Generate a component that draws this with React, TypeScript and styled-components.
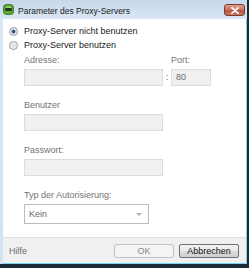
import React from 'react';
import styled, { createGlobalStyle } from 'styled-components';

const GlobalStyle = createGlobalStyle`
  html, body {
    margin: 0;
    padding: 0;
    background: #1d2a38;
  }
  body {
    width: 249px;
    height: 268px;
    overflow: hidden;
    font-family: 'Liberation Sans', Arial, sans-serif;
  }
`;

const Window = styled.div`
  width: 249px;
  height: 268px;
  box-sizing: border-box;
  display: flex;
  flex-direction: column;
  background: linear-gradient(#c6d8ec, #d9e6f3 18px, #d4e2f0);
  border-right: 2px solid #1d2a38;
  border-bottom: 4px solid #1d2a38;
`;

const TitleBar = styled.div`
  height: 19px;
  flex: none;
  display: flex;
  align-items: center;
  padding: 0 3px;
  gap: 4px;
`;

const Title = styled.span`
  flex: 1;
  font-size: 8.5px;
  color: #1a1a1a;
  padding-top: 2px;
`;

const CloseButton = styled.div`
  width: 21px;
  height: 12px;
  box-sizing: border-box;
  margin-top: 1px;
  margin-right: -1px;
  border: 1px solid #7d3b2e;
  border-radius: 3px;
  background: linear-gradient(#dea08f, #c7705b 50%, #b6573f 51%, #c67560);
  display: flex;
  align-items: center;
  justify-content: center;
`;

const Client = styled.div`
  flex: 1;
  margin-left: 3px;
  display: flex;
  flex-direction: column;
  background: #fff;
  border-right: 1px solid #74d4f2;
  border-bottom: 1px solid #74d4f2;
`;

const Content = styled.div`
  flex: 1;
  padding: 5px 0 0 6px;
`;

const RadioRow = styled.div`
  height: 14px;
  display: flex;
  align-items: center;
  font-size: 9px;
  color: #1a1a1a;
`;

const RadioDot = styled.span<{ $checked?: boolean }>`
  width: 9px;
  height: 9px;
  box-sizing: border-box;
  margin-right: 6px;
  border-radius: 50%;
  border: 1px solid #9a9a9a;
  background: radial-gradient(circle, ${(p) => (p.$checked ? '#2a4766 0, #3b5f85 1.7px, #e4e8ec 2.3px' : '#d8d8d8 0, #e8e8e8 2px')}, #f4f4f4);
`;

const Form = styled.div`
  margin-left: 15px;
  padding-top: 2px;
`;

const Field = styled.div<{ $first?: boolean }>`
  margin-top: ${(p) => (p.$first ? '0' : '13px')};
`;

const AddressGrid = styled.div`
  display: grid;
  grid-template-columns: 139px 8px 40px;
`;

const Label = styled.div`
  height: 13px;
  line-height: 13px;
  margin-bottom: 2px;
  font-size: 9px;
  color: #737373;
`;

const Colon = styled.div`
  grid-column: 2;
  grid-row: 2;
  height: 17px;
  line-height: 17px;
  text-align: center;
  font-size: 9px;
  color: #555;
`;

const Input = styled.div<{ $width?: number }>`
  width: ${(p) => p.$width ?? 139}px;
  height: 17px;
  box-sizing: border-box;
  padding-left: 4px;
  line-height: 15px;
  font-size: 9px;
  color: #6a6a6a;
  background: #f0f0f0;
  border: 1px solid #dcdcdc;
`;

const Select = styled.div`
  width: 125px;
  height: 20px;
  box-sizing: border-box;
  padding: 0 6px 0 4px;
  display: flex;
  align-items: center;
  justify-content: space-between;
  font-size: 9px;
  color: #6a6a6a;
  background: #fff;
  border: 1px solid #bdbdbd;
`;

const Arrow = styled.span`
  width: 0;
  height: 0;
  border-left: 3px solid transparent;
  border-right: 3px solid transparent;
  border-top: 3px solid #b0b0b0;
`;

const Footer = styled.div`
  height: 25px;
  flex: none;
  display: flex;
  align-items: center;
  gap: 5px;
  padding: 0 7px 0 6px;
  background: #f0f0f0;
  border-top: 1px solid #dfdfdf;
`;

const HelpLink = styled.span`
  flex: 1;
  font-size: 9px;
  color: #6d6d6d;
`;

const Button = styled.div<{ $disabled?: boolean }>`
  width: 60px;
  height: 14px;
  box-sizing: border-box;
  border-radius: 2px;
  display: flex;
  align-items: center;
  justify-content: center;
  font-size: 9px;
  color: ${(p) => (p.$disabled ? '#8a8a8a' : '#111')};
  border: 1px solid ${(p) => (p.$disabled ? '#c2c2c2' : '#707070')};
  background: ${(p) =>
    p.$disabled ? '#f4f4f4' : 'linear-gradient(#f3f3f3, #ebebeb 50%, #dddddd 51%, #cfcfcf)'};
`;

const AppIcon = () => (
  <svg width="11" height="11" viewBox="0 0 11 11">
    <rect x="0.5" y="0.5" width="10" height="10" rx="3" fill="#5fa83a" stroke="#3d7a22" />
    <rect x="2" y="4" width="7" height="3" rx="1" fill="#263b1c" />
    <rect x="3" y="2.5" width="5" height="1.5" rx="0.7" fill="#9fd47c" />
  </svg>
);

const CloseX = () => (
  <svg width="8" height="7" viewBox="0 0 8 7">
    <path d="M1 0.8 L7 6.2 M7 0.8 L1 6.2" stroke="#fff" strokeWidth="1.7" strokeLinecap="round" />
  </svg>
);

const App: React.FC = () => {
  return (
    <>
      <GlobalStyle />
      <Window>
        <TitleBar>
          <AppIcon />
          <Title>Parameter des Proxy-Servers</Title>
          <CloseButton>
            <CloseX />
          </CloseButton>
        </TitleBar>
        <Client>
          <Content>
            <RadioRow>
              <RadioDot $checked />
              Proxy-Server nicht benutzen
            </RadioRow>
            <RadioRow>
              <RadioDot />
              Proxy-Server benutzen
            </RadioRow>
            <Form>
              <Field $first>
                <AddressGrid>
                  <Label>Adresse:</Label>
                  <span />
                  <Label>Port:</Label>
                  <Input />
                  <Colon>:</Colon>
                  <Input $width={40}>80</Input>
                </AddressGrid>
              </Field>
              <Field>
                <Label>Benutzer</Label>
                <Input />
              </Field>
              <Field>
                <Label>Passwort:</Label>
                <Input />
              </Field>
              <Field>
                <Label>Typ der Autorisierung:</Label>
                <Select>
                  Kein
                  <Arrow />
                </Select>
              </Field>
            </Form>
          </Content>
          <Footer>
            <HelpLink>Hilfe</HelpLink>
            <Button $disabled>OK</Button>
            <Button>Abbrechen</Button>
          </Footer>
        </Client>
      </Window>
    </>
  );
};

export default App;
